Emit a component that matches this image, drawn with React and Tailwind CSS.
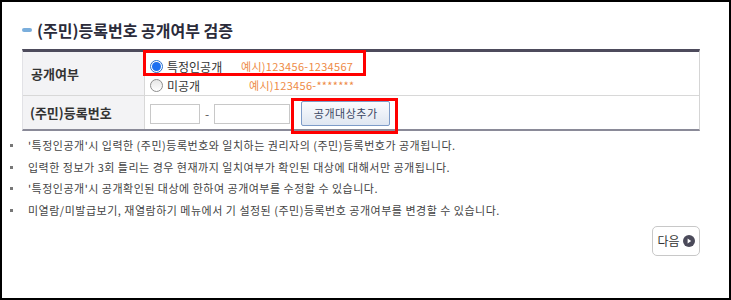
import React from 'react';

const notes = [
  "'특정인공개'시 입력한 (주민)등록번호와 일치하는 권리자의 (주민)등록번호가 공개됩니다.",
  '입력한 정보가 3회 틀리는 경우 현재까지 일치여부가 확인된 대상에 대해서만 공개됩니다.',
  "'특정인공개'시 공개확인된 대상에 한하여 공개여부를 수정할 수 있습니다.",
  '미열람/미발급보기, 재열람하기 메뉴에서 기 설정된 (주민)등록번호 공개여부를 변경할 수 있습니다.',
];

const Radio = ({ checked }) =>
  checked ? (
    <span className="flex h-[13px] w-[13px] items-center justify-center rounded-full border border-[#2a6fc9] bg-white">
      <span className="h-[9px] w-[9px] rounded-full bg-[#1c6ff0]" />
    </span>
  ) : (
    <span className="h-[13px] w-[13px] rounded-full border border-[#8d8d8d] bg-gradient-to-b from-[#e6e6e6] to-white" />
  );

const App = () => {
  return (
    <div className="relative box-border h-[300px] w-[731px] overflow-hidden border-2 border-black bg-white font-['Noto_Sans_CJK_KR',sans-serif] text-[#333]">
      {/* title */}
      <div className="ml-[20px] mt-[17px] flex h-[22px] items-center">
        <span className="h-[4px] w-[10px] rounded-full bg-[#7aaedc]" />
        <h2 className="ml-[5px] text-[16px] font-bold leading-[22px] text-[#2b2b3a]">
          (주민)등록번호 공개여부 검증
        </h2>
      </div>

      {/* table */}
      <div className="ml-[20px] mt-[8px] w-[678px] border-t-[3px] border-b-2 border-r border-l border-t-[#4d4b5c] border-b-[#8a8a98] border-r-[#d5d5d5] border-l-[#e2e2e6]">
        <div className="grid h-[44px] grid-cols-[122px_1fr] border-b border-[#d8d8d8]">
          <div className="flex items-center border-r border-[#d8d8d8] bg-[#f3f3f5] pl-[8px] text-[13px] font-bold">
            공개여부
          </div>
          <div className="pl-[5px] pt-[5px] text-[12px] leading-[19px]">
            <div className="flex items-center">
              <span className="flex w-[91px] items-center gap-[4px]">
                <Radio checked />
                특정인공개
              </span>
              <span className="text-[11px] tracking-[0.3px] text-[#ee8a45]">예시)123456-1234567</span>
            </div>
            <div className="flex items-center">
              <span className="flex w-[99px] items-center gap-[4px]">
                <Radio />
                미공개
              </span>
              <span className="text-[11px] tracking-[0.3px] text-[#ee8a45]">예시)123456-*******</span>
            </div>
          </div>
        </div>
        <div className="grid h-[33px] grid-cols-[122px_1fr]">
          <div className="flex items-center border-r border-[#d8d8d8] bg-[#f3f3f5] pl-[7px] text-[13px] font-bold">
            (주민)등록번호
          </div>
          <div className="flex items-center pl-[5px] pt-[2px]">
            <input className="h-[20px] w-[50px] border border-[#c8c8c8] bg-white" />
            <span className="mx-[5px] text-[12px] text-[#555]">-</span>
            <input className="h-[20px] w-[76px] border border-[#c8c8c8] bg-white" />
            <button className="ml-[11px] h-[25px] w-[89px] rounded-[2px] border border-[#7d9bc8] bg-gradient-to-b from-[#fbfcfe] to-[#dfe6f1] text-[11px] tracking-[0.5px] text-[#3b4763]">
              공개대상추가
            </button>
          </div>
        </div>
      </div>

      {/* notes */}
      <ul className="ml-[8px] mt-[4px] text-[11px] leading-[21.5px] tracking-[0.5px] text-[#444]">
        {notes.map((n) => (
          <li key={n} className="flex items-center">
            <span className="mr-[15px] h-[3px] w-[3px] bg-[#777]" />
            {n}
          </li>
        ))}
      </ul>

      {/* next */}
      <div className="mr-[29px] mt-[5px] flex justify-end">
        <button className="flex h-[30px] w-[48px] items-center justify-center gap-[3px] rounded-[5px] border border-[#c8c8c8] bg-white text-[12px] text-[#333]">
          다음
          <svg width="12" height="12" viewBox="0 0 12 12">
            <circle cx="6" cy="6" r="6" fill="#4b4a5a" />
            <path d="M4.6 3.4 L8.2 6 L4.6 8.6 Z" fill="#fff" />
          </svg>
        </button>
      </div>

      {/* annotation boxes */}
      <div className="pointer-events-none absolute left-[141px] top-[48px] h-[26px] w-[223px] border-[3px] border-[#ff0000]" />
      <div className="pointer-events-none absolute left-[289px] top-[96px] h-[36px] w-[107px] border-[3px] border-[#ff0000]" />
    </div>
  );
};

export default App;
